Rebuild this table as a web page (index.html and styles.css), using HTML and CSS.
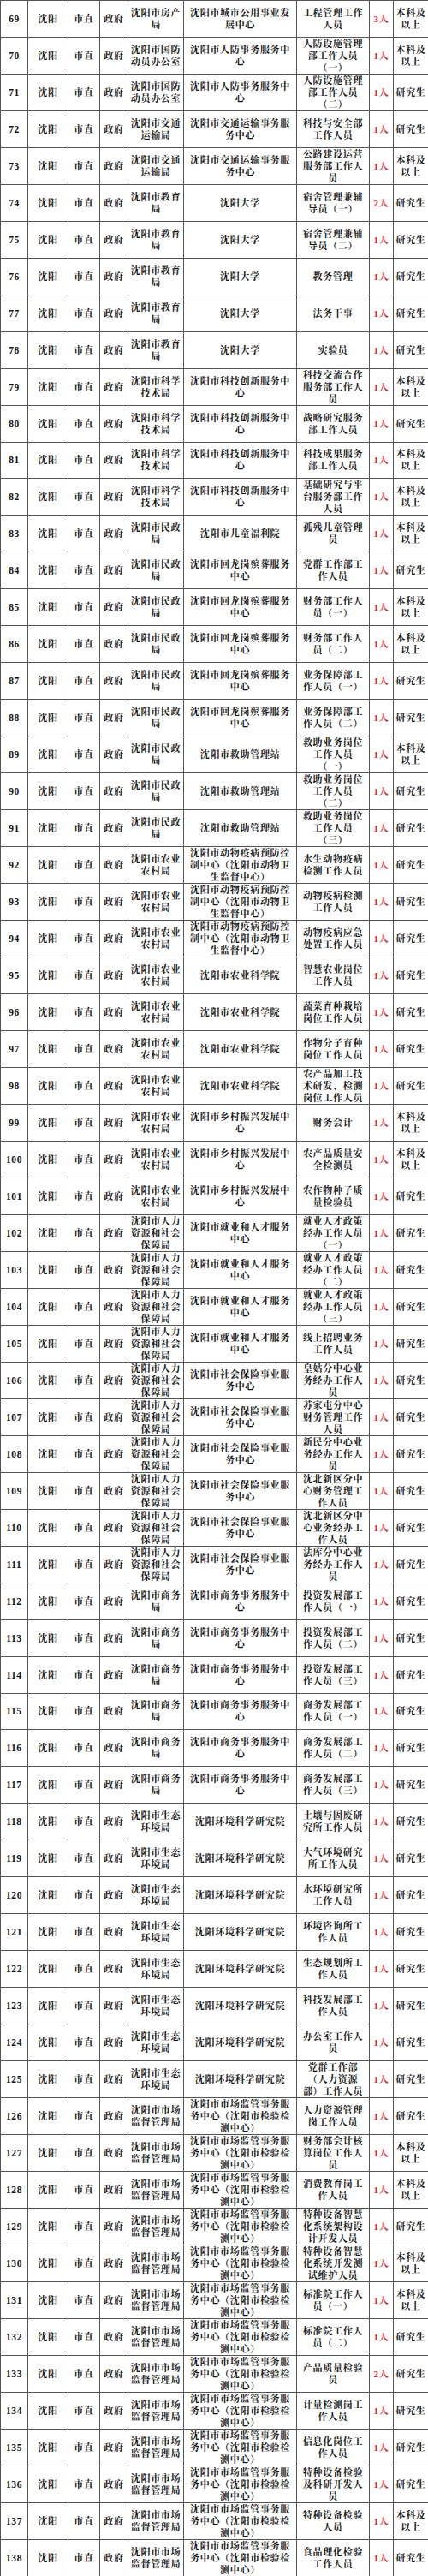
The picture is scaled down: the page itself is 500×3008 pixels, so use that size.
FILE: index.html
```html
<!DOCTYPE html>
<html lang="zh-CN">
<head>
<meta charset="utf-8">
<title>沈阳市直事业单位招聘岗位表</title>
<link rel="stylesheet" href="styles.css">
</head>
<body>
<table class="jobs">
<colgroup>
<col class="c-no"><col class="c-city"><col class="c-level"><col class="c-type"><col class="c-dept"><col class="c-unit"><col class="c-post"><col class="c-count"><col class="c-edu">
</colgroup>
<tbody>
<tr><td class="no">69</td><td>沈阳</td><td>市直</td><td>政府</td><td>沈阳市房产局</td><td>沈阳市城市公用事业发展中心</td><td>工程管理工作人员</td><td class="count">3人</td><td>本科及以上</td></tr>
<tr><td class="no">70</td><td>沈阳</td><td>市直</td><td>政府</td><td>沈阳市国防动员办公室</td><td>沈阳市人防事务服务中心</td><td>人防设施管理部工作人员（一）</td><td class="count">1人</td><td>本科及以上</td></tr>
<tr><td class="no">71</td><td>沈阳</td><td>市直</td><td>政府</td><td>沈阳市国防动员办公室</td><td>沈阳市人防事务服务中心</td><td>人防设施管理部工作人员（二）</td><td class="count">1人</td><td>研究生</td></tr>
<tr><td class="no">72</td><td>沈阳</td><td>市直</td><td>政府</td><td>沈阳市交通运输局</td><td>沈阳市交通运输事务服务中心</td><td>科技与安全部工作人员</td><td class="count">1人</td><td>研究生</td></tr>
<tr><td class="no">73</td><td>沈阳</td><td>市直</td><td>政府</td><td>沈阳市交通运输局</td><td>沈阳市交通运输事务服务中心</td><td>公路建设运营服务部工作人员</td><td class="count">1人</td><td>本科及以上</td></tr>
<tr><td class="no">74</td><td>沈阳</td><td>市直</td><td>政府</td><td>沈阳市教育局</td><td>沈阳大学</td><td>宿舍管理兼辅导员（一）</td><td class="count">2人</td><td>研究生</td></tr>
<tr><td class="no">75</td><td>沈阳</td><td>市直</td><td>政府</td><td>沈阳市教育局</td><td>沈阳大学</td><td>宿舍管理兼辅导员（二）</td><td class="count">1人</td><td>研究生</td></tr>
<tr><td class="no">76</td><td>沈阳</td><td>市直</td><td>政府</td><td>沈阳市教育局</td><td>沈阳大学</td><td>教务管理</td><td class="count">1人</td><td>研究生</td></tr>
<tr><td class="no">77</td><td>沈阳</td><td>市直</td><td>政府</td><td>沈阳市教育局</td><td>沈阳大学</td><td>法务干事</td><td class="count">1人</td><td>研究生</td></tr>
<tr><td class="no">78</td><td>沈阳</td><td>市直</td><td>政府</td><td>沈阳市教育局</td><td>沈阳大学</td><td>实验员</td><td class="count">1人</td><td>研究生</td></tr>
<tr><td class="no">79</td><td>沈阳</td><td>市直</td><td>政府</td><td>沈阳市科学技术局</td><td>沈阳市科技创新服务中心</td><td>科技交流合作服务部工作人员</td><td class="count">1人</td><td>本科及以上</td></tr>
<tr><td class="no">80</td><td>沈阳</td><td>市直</td><td>政府</td><td>沈阳市科学技术局</td><td>沈阳市科技创新服务中心</td><td>战略研究服务部工作人员</td><td class="count">1人</td><td>研究生</td></tr>
<tr><td class="no">81</td><td>沈阳</td><td>市直</td><td>政府</td><td>沈阳市科学技术局</td><td>沈阳市科技创新服务中心</td><td>科技成果服务部工作人员</td><td class="count">1人</td><td>本科及以上</td></tr>
<tr><td class="no">82</td><td>沈阳</td><td>市直</td><td>政府</td><td>沈阳市科学技术局</td><td>沈阳市科技创新服务中心</td><td>基础研究与平台服务部工作人员</td><td class="count">1人</td><td>本科及以上</td></tr>
<tr><td class="no">83</td><td>沈阳</td><td>市直</td><td>政府</td><td>沈阳市民政局</td><td>沈阳市儿童福利院</td><td>孤残儿童管理员</td><td class="count">1人</td><td>本科及以上</td></tr>
<tr><td class="no">84</td><td>沈阳</td><td>市直</td><td>政府</td><td>沈阳市民政局</td><td>沈阳市回龙岗殡葬服务中心</td><td>党群工作部工作人员</td><td class="count">1人</td><td>研究生</td></tr>
<tr><td class="no">85</td><td>沈阳</td><td>市直</td><td>政府</td><td>沈阳市民政局</td><td>沈阳市回龙岗殡葬服务中心</td><td>财务部工作人员（一）</td><td class="count">1人</td><td>本科及以上</td></tr>
<tr><td class="no">86</td><td>沈阳</td><td>市直</td><td>政府</td><td>沈阳市民政局</td><td>沈阳市回龙岗殡葬服务中心</td><td>财务部工作人员（二）</td><td class="count">1人</td><td>本科及以上</td></tr>
<tr><td class="no">87</td><td>沈阳</td><td>市直</td><td>政府</td><td>沈阳市民政局</td><td>沈阳市回龙岗殡葬服务中心</td><td>业务保障部工作人员（一）</td><td class="count">1人</td><td>研究生</td></tr>
<tr><td class="no">88</td><td>沈阳</td><td>市直</td><td>政府</td><td>沈阳市民政局</td><td>沈阳市回龙岗殡葬服务中心</td><td>业务保障部工作人员（二）</td><td class="count">1人</td><td>研究生</td></tr>
<tr><td class="no">89</td><td>沈阳</td><td>市直</td><td>政府</td><td>沈阳市民政局</td><td>沈阳市救助管理站</td><td>救助业务岗位工作人员（一）</td><td class="count">1人</td><td>本科及以上</td></tr>
<tr><td class="no">90</td><td>沈阳</td><td>市直</td><td>政府</td><td>沈阳市民政局</td><td>沈阳市救助管理站</td><td>救助业务岗位工作人员（二）</td><td class="count">1人</td><td>研究生</td></tr>
<tr><td class="no">91</td><td>沈阳</td><td>市直</td><td>政府</td><td>沈阳市民政局</td><td>沈阳市救助管理站</td><td>救助业务岗位工作人员（三）</td><td class="count">1人</td><td>研究生</td></tr>
<tr><td class="no">92</td><td>沈阳</td><td>市直</td><td>政府</td><td>沈阳市农业农村局</td><td>沈阳市动物疫病预防控制中心（沈阳市动物卫生监督中心）</td><td>水生动物疫病检测工作人员</td><td class="count">1人</td><td>研究生</td></tr>
<tr><td class="no">93</td><td>沈阳</td><td>市直</td><td>政府</td><td>沈阳市农业农村局</td><td>沈阳市动物疫病预防控制中心（沈阳市动物卫生监督中心）</td><td>动物疫病检测工作人员</td><td class="count">1人</td><td>研究生</td></tr>
<tr><td class="no">94</td><td>沈阳</td><td>市直</td><td>政府</td><td>沈阳市农业农村局</td><td>沈阳市动物疫病预防控制中心（沈阳市动物卫生监督中心）</td><td>动物疫病应急处置工作人员</td><td class="count">1人</td><td>研究生</td></tr>
<tr><td class="no">95</td><td>沈阳</td><td>市直</td><td>政府</td><td>沈阳市农业农村局</td><td>沈阳市农业科学院</td><td>智慧农业岗位工作人员</td><td class="count">1人</td><td>研究生</td></tr>
<tr><td class="no">96</td><td>沈阳</td><td>市直</td><td>政府</td><td>沈阳市农业农村局</td><td>沈阳市农业科学院</td><td>蔬菜育种栽培岗位工作人员</td><td class="count">1人</td><td>研究生</td></tr>
<tr><td class="no">97</td><td>沈阳</td><td>市直</td><td>政府</td><td>沈阳市农业农村局</td><td>沈阳市农业科学院</td><td>作物分子育种岗位工作人员</td><td class="count">1人</td><td>研究生</td></tr>
<tr><td class="no">98</td><td>沈阳</td><td>市直</td><td>政府</td><td>沈阳市农业农村局</td><td>沈阳市农业科学院</td><td>农产品加工技术研发、检测岗位工作人员</td><td class="count">1人</td><td>研究生</td></tr>
<tr><td class="no">99</td><td>沈阳</td><td>市直</td><td>政府</td><td>沈阳市农业农村局</td><td>沈阳市乡村振兴发展中心</td><td>财务会计</td><td class="count">1人</td><td>本科及以上</td></tr>
<tr><td class="no">100</td><td>沈阳</td><td>市直</td><td>政府</td><td>沈阳市农业农村局</td><td>沈阳市乡村振兴发展中心</td><td>农产品质量安全检测员</td><td class="count">1人</td><td>本科及以上</td></tr>
<tr><td class="no">101</td><td>沈阳</td><td>市直</td><td>政府</td><td>沈阳市农业农村局</td><td>沈阳市乡村振兴发展中心</td><td>农作物种子质量检验员</td><td class="count">1人</td><td>研究生</td></tr>
<tr><td class="no">102</td><td>沈阳</td><td>市直</td><td>政府</td><td>沈阳市人力资源和社会保障局</td><td>沈阳市就业和人才服务中心</td><td>就业人才政策经办工作人员（一）</td><td class="count">1人</td><td>研究生</td></tr>
<tr><td class="no">103</td><td>沈阳</td><td>市直</td><td>政府</td><td>沈阳市人力资源和社会保障局</td><td>沈阳市就业和人才服务中心</td><td>就业人才政策经办工作人员（二）</td><td class="count">1人</td><td>研究生</td></tr>
<tr><td class="no">104</td><td>沈阳</td><td>市直</td><td>政府</td><td>沈阳市人力资源和社会保障局</td><td>沈阳市就业和人才服务中心</td><td>就业人才政策经办工作人员（三）</td><td class="count">1人</td><td>研究生</td></tr>
<tr><td class="no">105</td><td>沈阳</td><td>市直</td><td>政府</td><td>沈阳市人力资源和社会保障局</td><td>沈阳市就业和人才服务中心</td><td>线上招聘业务工作人员</td><td class="count">1人</td><td>研究生</td></tr>
<tr><td class="no">106</td><td>沈阳</td><td>市直</td><td>政府</td><td>沈阳市人力资源和社会保障局</td><td>沈阳市社会保险事业服务中心</td><td>皇姑分中心业务经办工作人员</td><td class="count">1人</td><td>研究生</td></tr>
<tr><td class="no">107</td><td>沈阳</td><td>市直</td><td>政府</td><td>沈阳市人力资源和社会保障局</td><td>沈阳市社会保险事业服务中心</td><td>苏家屯分中心财务管理工作人员</td><td class="count">1人</td><td>研究生</td></tr>
<tr><td class="no">108</td><td>沈阳</td><td>市直</td><td>政府</td><td>沈阳市人力资源和社会保障局</td><td>沈阳市社会保险事业服务中心</td><td>新民分中心业务经办工作人员</td><td class="count">1人</td><td>研究生</td></tr>
<tr><td class="no">109</td><td>沈阳</td><td>市直</td><td>政府</td><td>沈阳市人力资源和社会保障局</td><td>沈阳市社会保险事业服务中心</td><td>沈北新区分中心财务管理工作人员</td><td class="count">1人</td><td>研究生</td></tr>
<tr><td class="no">110</td><td>沈阳</td><td>市直</td><td>政府</td><td>沈阳市人力资源和社会保障局</td><td>沈阳市社会保险事业服务中心</td><td>沈北新区分中心业务经办工作人员</td><td class="count">1人</td><td>研究生</td></tr>
<tr><td class="no">111</td><td>沈阳</td><td>市直</td><td>政府</td><td>沈阳市人力资源和社会保障局</td><td>沈阳市社会保险事业服务中心</td><td>法库分中心业务经办工作人员</td><td class="count">1人</td><td>研究生</td></tr>
<tr><td class="no">112</td><td>沈阳</td><td>市直</td><td>政府</td><td>沈阳市商务局</td><td>沈阳市商务事务服务中心</td><td>投资发展部工作人员（一）</td><td class="count">1人</td><td>研究生</td></tr>
<tr><td class="no">113</td><td>沈阳</td><td>市直</td><td>政府</td><td>沈阳市商务局</td><td>沈阳市商务事务服务中心</td><td>投资发展部工作人员（二）</td><td class="count">1人</td><td>研究生</td></tr>
<tr><td class="no">114</td><td>沈阳</td><td>市直</td><td>政府</td><td>沈阳市商务局</td><td>沈阳市商务事务服务中心</td><td>投资发展部工作人员（三）</td><td class="count">1人</td><td>研究生</td></tr>
<tr><td class="no">115</td><td>沈阳</td><td>市直</td><td>政府</td><td>沈阳市商务局</td><td>沈阳市商务事务服务中心</td><td>商务发展部工作人员（一）</td><td class="count">1人</td><td>研究生</td></tr>
<tr><td class="no">116</td><td>沈阳</td><td>市直</td><td>政府</td><td>沈阳市商务局</td><td>沈阳市商务事务服务中心</td><td>商务发展部工作人员（二）</td><td class="count">1人</td><td>研究生</td></tr>
<tr><td class="no">117</td><td>沈阳</td><td>市直</td><td>政府</td><td>沈阳市商务局</td><td>沈阳市商务事务服务中心</td><td>商务发展部工作人员（三）</td><td class="count">1人</td><td>研究生</td></tr>
<tr><td class="no">118</td><td>沈阳</td><td>市直</td><td>政府</td><td>沈阳市生态环境局</td><td>沈阳环境科学研究院</td><td>土壤与固废研究所工作人员</td><td class="count">1人</td><td>研究生</td></tr>
<tr><td class="no">119</td><td>沈阳</td><td>市直</td><td>政府</td><td>沈阳市生态环境局</td><td>沈阳环境科学研究院</td><td>大气环境研究所工作人员</td><td class="count">1人</td><td>研究生</td></tr>
<tr><td class="no">120</td><td>沈阳</td><td>市直</td><td>政府</td><td>沈阳市生态环境局</td><td>沈阳环境科学研究院</td><td>水环境研究所工作人员</td><td class="count">1人</td><td>研究生</td></tr>
<tr><td class="no">121</td><td>沈阳</td><td>市直</td><td>政府</td><td>沈阳市生态环境局</td><td>沈阳环境科学研究院</td><td>环境咨询所工作人员</td><td class="count">1人</td><td>研究生</td></tr>
<tr><td class="no">122</td><td>沈阳</td><td>市直</td><td>政府</td><td>沈阳市生态环境局</td><td>沈阳环境科学研究院</td><td>生态规划所工作人员</td><td class="count">1人</td><td>研究生</td></tr>
<tr><td class="no">123</td><td>沈阳</td><td>市直</td><td>政府</td><td>沈阳市生态环境局</td><td>沈阳环境科学研究院</td><td>科技发展部工作人员</td><td class="count">1人</td><td>研究生</td></tr>
<tr><td class="no">124</td><td>沈阳</td><td>市直</td><td>政府</td><td>沈阳市生态环境局</td><td>沈阳环境科学研究院</td><td>办公室工作人员</td><td class="count">1人</td><td>研究生</td></tr>
<tr><td class="no">125</td><td>沈阳</td><td>市直</td><td>政府</td><td>沈阳市生态环境局</td><td>沈阳环境科学研究院</td><td>党群工作部（人力资源部）工作人员</td><td class="count">1人</td><td>研究生</td></tr>
<tr><td class="no">126</td><td>沈阳</td><td>市直</td><td>政府</td><td>沈阳市市场监督管理局</td><td>沈阳市市场监管事务服务中心（沈阳市检验检测中心）</td><td>人力资源管理岗工作人员</td><td class="count">1人</td><td>研究生</td></tr>
<tr><td class="no">127</td><td>沈阳</td><td>市直</td><td>政府</td><td>沈阳市市场监督管理局</td><td>沈阳市市场监管事务服务中心（沈阳市检验检测中心）</td><td>财务部会计核算岗位工作人员</td><td class="count">1人</td><td>本科及以上</td></tr>
<tr><td class="no">128</td><td>沈阳</td><td>市直</td><td>政府</td><td>沈阳市市场监督管理局</td><td>沈阳市市场监管事务服务中心（沈阳市检验检测中心）</td><td>消费教育岗工作人员</td><td class="count">1人</td><td>本科及以上</td></tr>
<tr><td class="no">129</td><td>沈阳</td><td>市直</td><td>政府</td><td>沈阳市市场监督管理局</td><td>沈阳市市场监管事务服务中心（沈阳市检验检测中心）</td><td>特种设备智慧化系统架构设计开发人员</td><td class="count">1人</td><td>研究生</td></tr>
<tr><td class="no">130</td><td>沈阳</td><td>市直</td><td>政府</td><td>沈阳市市场监督管理局</td><td>沈阳市市场监管事务服务中心（沈阳市检验检测中心）</td><td>特种设备智慧化系统开发测试维护人员</td><td class="count">1人</td><td>本科及以上</td></tr>
<tr><td class="no">131</td><td>沈阳</td><td>市直</td><td>政府</td><td>沈阳市市场监督管理局</td><td>沈阳市市场监管事务服务中心（沈阳市检验检测中心）</td><td>标准院工作人员（一）</td><td class="count">1人</td><td>本科及以上</td></tr>
<tr><td class="no">132</td><td>沈阳</td><td>市直</td><td>政府</td><td>沈阳市市场监督管理局</td><td>沈阳市市场监管事务服务中心（沈阳市检验检测中心）</td><td>标准院工作人员（二）</td><td class="count">1人</td><td>研究生</td></tr>
<tr><td class="no">133</td><td>沈阳</td><td>市直</td><td>政府</td><td>沈阳市市场监督管理局</td><td>沈阳市市场监管事务服务中心（沈阳市检验检测中心）</td><td>产品质量检验员</td><td class="count">2人</td><td>研究生</td></tr>
<tr><td class="no">134</td><td>沈阳</td><td>市直</td><td>政府</td><td>沈阳市市场监督管理局</td><td>沈阳市市场监管事务服务中心（沈阳市检验检测中心）</td><td>计量检测岗工作人员</td><td class="count">1人</td><td>研究生</td></tr>
<tr><td class="no">135</td><td>沈阳</td><td>市直</td><td>政府</td><td>沈阳市市场监督管理局</td><td>沈阳市市场监管事务服务中心（沈阳市检验检测中心）</td><td>信息化岗位工作人员</td><td class="count">1人</td><td>研究生</td></tr>
<tr><td class="no">136</td><td>沈阳</td><td>市直</td><td>政府</td><td>沈阳市市场监督管理局</td><td>沈阳市市场监管事务服务中心（沈阳市检验检测中心）</td><td>特种设备检验及科研开发人员</td><td class="count">1人</td><td>研究生</td></tr>
<tr><td class="no">137</td><td>沈阳</td><td>市直</td><td>政府</td><td>沈阳市市场监督管理局</td><td>沈阳市市场监管事务服务中心（沈阳市检验检测中心）</td><td>特种设备检验人员</td><td class="count">1人</td><td>本科及以上</td></tr>
<tr><td class="no">138</td><td>沈阳</td><td>市直</td><td>政府</td><td>沈阳市市场监督管理局</td><td>沈阳市市场监管事务服务中心（沈阳市检验检测中心）</td><td>食品理化检验工作人员</td><td class="count">1人</td><td>研究生</td></tr>
</tbody>
</table>
</body>
</html>
```

FILE: styles.css
```css
html, body {
  margin: 0;
  padding: 0;
  background: #ffffff;
}

body {
  font-family: "Liberation Serif", "Noto Serif CJK SC", "Noto Sans CJK SC", serif;
  color: #141414;
}

.jobs {
  width: 500px;
  table-layout: fixed;
  border-collapse: collapse;
  font-size: 11px;
  line-height: 14px;
  letter-spacing: 0.7px;
  font-weight: 700;
}

.jobs tr {
  height: 42.94px;
}

.jobs td {
  border: 1px solid #555555;
  padding: 0 2px;
  text-align: center;
  vertical-align: middle;
  overflow: hidden;
}

.c-no { width: 32px; }
.c-city { width: 47px; }
.c-level { width: 37px; }
.c-type { width: 33px; }
.c-dept { width: 65px; }
.c-unit { width: 132px; }
.c-post { width: 85px; }
.c-count { width: 28px; }
.c-edu { width: 41px; }

.jobs td:nth-child(6) { padding: 0 4px; }
.jobs td:nth-child(7) { padding: 0 4px; }
.jobs td:nth-child(9) { padding: 0 1px; }

.jobs .no {
  font-size: 11.5px;
  letter-spacing: 0.6px;
}

.jobs .count {
  padding: 0;
  color: #d8262d;
}
```
